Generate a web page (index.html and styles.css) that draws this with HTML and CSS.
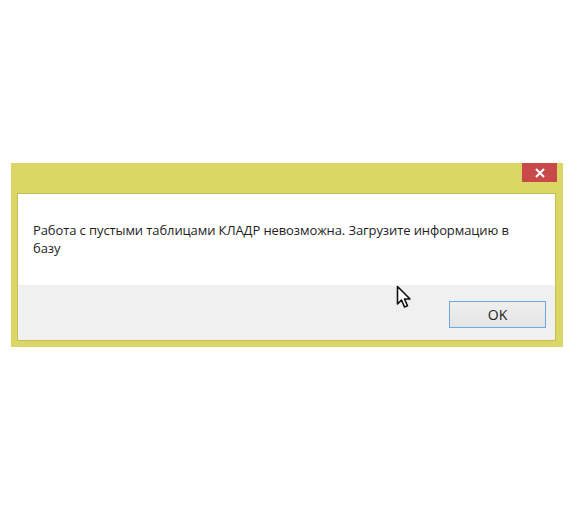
FILE: index.html
```html
<!DOCTYPE html>
<html lang="ru">
<head>
  <meta charset="UTF-8" />
  <meta name="viewport" content="width=device-width, initial-scale=1.0" />
  <title>Сообщение</title>
  <link rel="stylesheet" href="styles.css">
</head>
<body>

  <div class="window">
    <div class="titlebar">
      <div class="close">
        <svg width="10" height="10" viewBox="0 0 10 10">
          <path d="M1 1 L9 9 M9 1 L1 9" stroke="#fff" stroke-width="2" />
        </svg>
      </div>
    </div>
    <div class="content">
      <div class="message">
        Работа с пустыми таблицами КЛАДР невозможна. Загрузите информацию в базу
      </div>
      <div class="footer">
        <button class="ok">OK</button>
      </div>
    </div>
  </div>

  <svg class="cursor" width="18" height="25" viewBox="0 0 18 25">
    <path d="M1.5 1.5 L1.5 19 L5.5 15 L8.5 22 L11.5 20.8 L8.5 14 L14 14 Z" fill="#fff" stroke="#111" stroke-width="1.6" stroke-linejoin="round" />
  </svg>

</body>
</html>
```

FILE: styles.css
```css
body {
  margin: 0;
  background: #fff;
  font-family: 'Open Sans', 'Noto Sans', sans-serif;
  color: #1e1e1e;
  position: relative;
}

.window {
  margin: 163px 0 0 11px;
  width: 552px;
  box-sizing: border-box;
  background: #dbd764;
  padding: 0 7px 6px 6px;
}

.titlebar {
  height: 30px;
  display: flex;
  justify-content: flex-end;
  align-items: flex-start;
}

.close {
  width: 35px;
  height: 19px;
  margin-right: -1px;
  background: #c9494b;
  display: flex;
  align-items: center;
  justify-content: center;
}

.content {
  border: 1px solid #c3bf58;
  background: #fff;
}

.message {
  height: 91px;
  box-sizing: border-box;
  padding: 27px 30px 0 15px;
  font-size: 13px;
  line-height: 18px;
  letter-spacing: -0.1px;
}

.footer {
  background: #f0f0f0;
  height: 55px;
  box-sizing: border-box;
  padding: 16px 9px 0 0;
  display: flex;
  justify-content: flex-end;
  align-items: flex-start;
}

.ok {
  width: 97px;
  height: 27px;
  border: 1px solid #6ea8e2;
  background: linear-gradient(#efefef, #e4e4e4);
  font-family: 'Open Sans', 'Noto Sans', sans-serif;
  font-size: 14px;
  color: #222;
  padding: 0;
}

.cursor {
  position: absolute;
  left: 396px;
  top: 285px;
}
```
